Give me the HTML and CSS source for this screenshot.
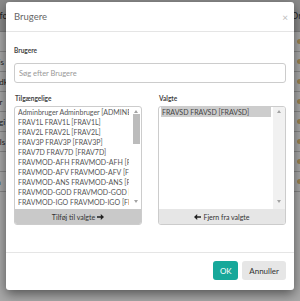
FILE: index.html
```html
<!DOCTYPE html>
<html lang="da">
<head>
  <meta charset="UTF-8">
  <title>Brugere</title>
  <link rel="stylesheet" href="styles.css">
</head>
<body>
  <div class="page">
    <div class="thead"><span class="cell-l">Info</span><span class="cell-r">Org</span></div>
    <div class="trow"><span class="cell-l"></span><span class="dot"></span></div>
    <div class="trow"><span class="cell-l">Fis</span><span class="dot"></span></div>
    <div class="trow"><span class="cell-l">Adk</span><span class="dot"></span></div>
    <div class="trow"><span class="cell-l">Ar</span><span class="dot"></span></div>
    <div class="trow"><span class="cell-l">Rgi</span><span class="dot"></span></div>
    <div class="trow"><span class="cell-l">Uls</span><span class="dot"></span></div>
    <div class="trow"><span class="cell-l"></span><span class="dot"></span></div>
    <div class="trow"><span class="cell-l">In</span><span class="dot"></span></div>
    <div class="trow last"><span class="foot-a">1 Ingus</span><span class="foot-b">1 Ingus</span></div>
  </div>
  <div class="overlay"></div>

  <div class="modal">
    <div class="modal-header">
      <span class="modal-title">Brugere</span>
      <span class="close">×</span>
    </div>
    <div class="modal-body">
      <label class="lbl">Brugere</label>
      <input class="search" type="text" placeholder="Søg efter Brugere">
      <div class="cols">
        <div class="col">
          <label class="lbl">Tilgængelige</label>
          <div class="box">
            <div class="list-wrap">
              <div class="list">
                <div class="item">Adminbruger Adminbruger [ADMINBRUGER]</div>
                <div class="item">FRAV1L FRAV1L [FRAV1L]</div>
                <div class="item">FRAV2L FRAV2L [FRAV2L]</div>
                <div class="item">FRAV3P FRAV3P [FRAV3P]</div>
                <div class="item">FRAV7D FRAV7D [FRAV7D]</div>
                <div class="item">FRAVMOD-AFH FRAVMOD-AFH [FRAVMOD-AFH]</div>
                <div class="item">FRAVMOD-AFV FRAVMOD-AFV [FRAVMOD-AFV]</div>
                <div class="item">FRAVMOD-ANS FRAVMOD-ANS [FRAVMOD-ANS]</div>
                <div class="item">FRAVMOD-GOD FRAVMOD-GOD [FRAVMOD-GOD]</div>
                <div class="item">FRAVMOD-IGO FRAVMOD-IGO [FRAVMOD-IGO]</div>
              </div>
              <div class="sbar">
                <span class="arr up"></span>
                <span class="thumb"></span>
                <span class="arr down"></span>
              </div>
            </div>
            <button class="move add">Tilføj til valgte
              <svg width="7" height="6" viewBox="0 0 7 6"><path d="M0 2.2h3.8V0L7 3 3.8 6V3.8H0z" fill="#222"/></svg>
            </button>
          </div>
        </div>
        <div class="col">
          <label class="lbl">Valgte</label>
          <div class="box">
            <div class="list-wrap">
              <div class="list">
                <div class="item sel">FRAVSD FRAVSD [FRAVSD]</div>
              </div>
              <div class="sbar track">
                <span class="arr up"></span>
                <span class="arr down"></span>
              </div>
            </div>
            <button class="move remove">
              <svg width="7" height="6" viewBox="0 0 7 6"><path d="M7 2.2H3.2V0L0 3l3.2 3V3.8H7z" fill="#222"/></svg>
              Fjern fra valgte</button>
          </div>
        </div>
      </div>
    </div>
    <div class="modal-footer">
      <button class="btn ok">OK</button>
      <button class="btn cancel">Annuller</button>
    </div>
  </div>
</body>
</html>
```

FILE: styles.css
```css
body { margin: 0; font-family: Lato, "Open Sans", sans-serif; background: #fff; width: 300px; height: 301px; overflow: hidden; position: relative; }

.page { width: 300px; }
.thead { height: 31px; background: #d4d4d4; display: flex; justify-content: space-between; align-items: center; font-size: 9px; color: #333; border-bottom: 1px solid #bbb; }
.cell-l { margin-left: -8px; }
.cell-r { margin-right: -6px; }
.trow { height: 19px; border-bottom: 1px solid #ccc; display: flex; justify-content: space-between; align-items: center; font-size: 8px; color: #333; }
.trow .cell-l { margin-left: -6px; }
.dot { width: 5px; height: 5px; border-radius: 50%; background: #e8c47a; margin-right: -2px; }
.trow.last { height: 40px; align-items: flex-end; justify-content: flex-start; border-bottom: 0; font-size: 6px; }
.foot-a { margin-left: 136px; }
.foot-b { margin-left: 62px; }

.overlay { position: absolute; inset: 0; background: rgba(0,0,0,0.34); }

.modal { position: absolute; left: 6px; top: 2px; width: 288px; height: 288px; background: #fff; border-radius: 3px; box-shadow: 0 4px 12px rgba(0,0,0,0.5); display: flex; flex-direction: column; }
.modal-header { height: 29px; border-bottom: 1px solid #e5e5e5; display: flex; align-items: center; justify-content: space-between; padding: 0 8px; }
.modal-title { font-size: 9.5px; color: #666; }
.close { font-size: 10px; color: #bbb; margin-right: -2px; }

.modal-body { height: 221px; border-bottom: 1px solid #e5e5e5; padding: 15px 8px 0; box-sizing: border-box; }
.lbl { display: block; font-size: 6.5px; font-weight: bold; color: #444; line-height: 8px; }
.search { display: block; width: 100%; height: 20px; box-sizing: border-box; margin-top: 8px; border: 1px solid #ccc; border-radius: 3px; padding: 0 4px; font-family: inherit; font-size: 7.5px; color: #555; }
.search::placeholder { color: #999; }

.cols { display: flex; gap: 16px; margin-top: 12px; }
.col { flex: 1 1 0; min-width: 0; }
.col .lbl { margin-left: 1px; }
.box { margin-top: 3px; border: 1px solid #ccc; border-radius: 3px; overflow: hidden; }
.list-wrap { display: flex; height: 102px; }
.list { flex: 1; min-width: 0; overflow: hidden; padding: 0 2px 0 3px; }
.item { font-size: 7px; line-height: 10px; color: #555; white-space: nowrap; overflow: hidden; }
.item.sel { background: #cdcdcd; color: #444; margin-left: -1px; padding-left: 1px; }
.sbar { width: 10px; flex: none; display: flex; flex-direction: column; align-items: center; padding: 3px 0; box-sizing: border-box; }
.sbar.track { width: 12px; background: #f1f1f1; }
.thumb { width: 7px; height: 30px; background: #bcbcbc; margin-top: 1px; }
.arr { width: 0; height: 0; border-left: 2.5px solid transparent; border-right: 2.5px solid transparent; }
.arr.up { border-bottom: 3px solid #a3a3a3; }
.arr.down { border-top: 3px solid #a3a3a3; margin-top: auto; margin-bottom: 3px; }
.move { display: flex; align-items: center; justify-content: center; gap: 2px; width: 100%; height: 15px; border: 0; font-family: inherit; font-size: 7px; color: #333; padding: 0; }
.move.add { background: #c9c9c9; }
.move.remove { background: #e6e6e6; }

.modal-footer { display: flex; justify-content: flex-end; gap: 4px; padding: 8px 8px 0; }
.btn { height: 19px; border: 0; border-radius: 3px; font-family: inherit; font-size: 8px; padding: 0 7px; }
.btn.ok { background: #17a89a; color: #fff; width: 25px; padding: 0; }
.btn.cancel { background: #e6e6e6; color: #333; }
```
